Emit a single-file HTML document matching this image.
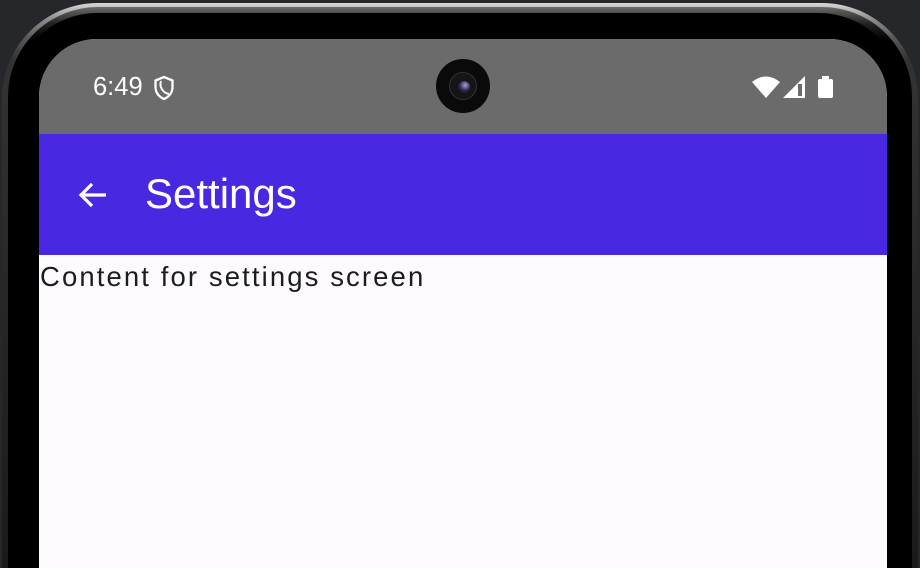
<!DOCTYPE html>
<html><head><style>
html,body{margin:0;padding:0;width:920px;height:568px;overflow:hidden;background:#26272a;font-family:"Liberation Sans",sans-serif;position:relative}
.frame{position:absolute;left:2px;top:3px;width:916px;height:565px;border-radius:96px 96px 0 0;background:linear-gradient(180deg,#d8d8d8,#8a8a8a 3%,#5a5a5a 6%,#333 10%,#1a1a1a);}
.f2{position:absolute;left:6px;top:4px;right:6px;bottom:0;border-radius:90px 90px 0 0;background:linear-gradient(180deg,#6a6a6a,#222 3%,#000 6%);}
.bez{position:absolute;left:13px;top:13px;width:890px;height:555px;border-radius:84px 84px 0 0;background:#000}
.screen{position:absolute;left:39px;top:39px;width:848px;height:529px;border-radius:58px 58px 0 0;overflow:hidden;background:#fdfbfe}
.sb{position:absolute;left:0;top:0;width:848px;height:95px;background:#6b6b6b}
.tb{position:absolute;left:0;top:95px;width:848px;height:121px;background:#4a27e0}
.time{position:absolute;left:54px;top:34px;color:#fff;font-size:25.5px}
.title{position:absolute;left:106px;top:131px;color:#fff;font-size:42px}
.content{position:absolute;left:1px;top:222px;color:#1c1b1f;font-size:27.5px;letter-spacing:2.1px}
.cam{position:absolute;left:397px;top:20px;width:54px;height:54px;border-radius:50%;background:#0a0a0a}
.cam2{position:absolute;left:13px;top:13px;width:28px;height:28px;border-radius:50%;background:#151515;border:1px solid #333;box-sizing:border-box}
.cam3{position:absolute;left:8px;top:8px;width:12px;height:12px;border-radius:50%;background:radial-gradient(circle at 60% 35%,#a8a0d8,#302850 50%,#0a0a14)}
</style></head><body>
<div class="frame"><div class="f2"></div></div>
<div class="bez"></div>
<div class="screen">
 <div class="sb">
  <div class="time">6:49</div>
  <svg style="position:absolute;left:114px;top:36px" width="22" height="26" viewBox="0 0 22 26"><path d="M11 2 L19.5 5.5 V12 C19.5 18 15.5 22 11 24 C6.5 22 2.5 18 2.5 12 V5.5 Z" fill="none" stroke="#fff" stroke-width="2.3" stroke-linejoin="round"/><path d="M8 6 C6 12 10 18 16 19" fill="none" stroke="#fff" stroke-width="2"/></svg>
  <div class="cam"><div class="cam2"><div class="cam3"></div></div></div>
  <svg style="position:absolute;left:712px;top:35px" width="90" height="26" viewBox="0 0 90 26"><path d="M1 8 Q15 -3 29 8 L15 24 Z" fill="#fff"/><path d="M32 24 L54 2 V24 Z" fill="#fff"/><rect x="47" y="10" width="4" height="12" fill="#6b6b6b"/><rect x="67" y="5" width="15" height="19" rx="2" fill="#fff"/><rect x="71" y="2" width="7" height="4" fill="#fff"/></svg>
 </div>
 <div class="tb">
  <svg style="position:absolute;left:37px;top:44px" width="34" height="34" viewBox="0 0 34 34"><path d="M30 17 H6 M16 6 L5 17 L16 28" fill="none" stroke="#fff" stroke-width="3.2"/></svg>
 </div>
 <div class="title">Settings</div>
 <div class="content">Content for settings screen</div>
</div>
</body></html>
